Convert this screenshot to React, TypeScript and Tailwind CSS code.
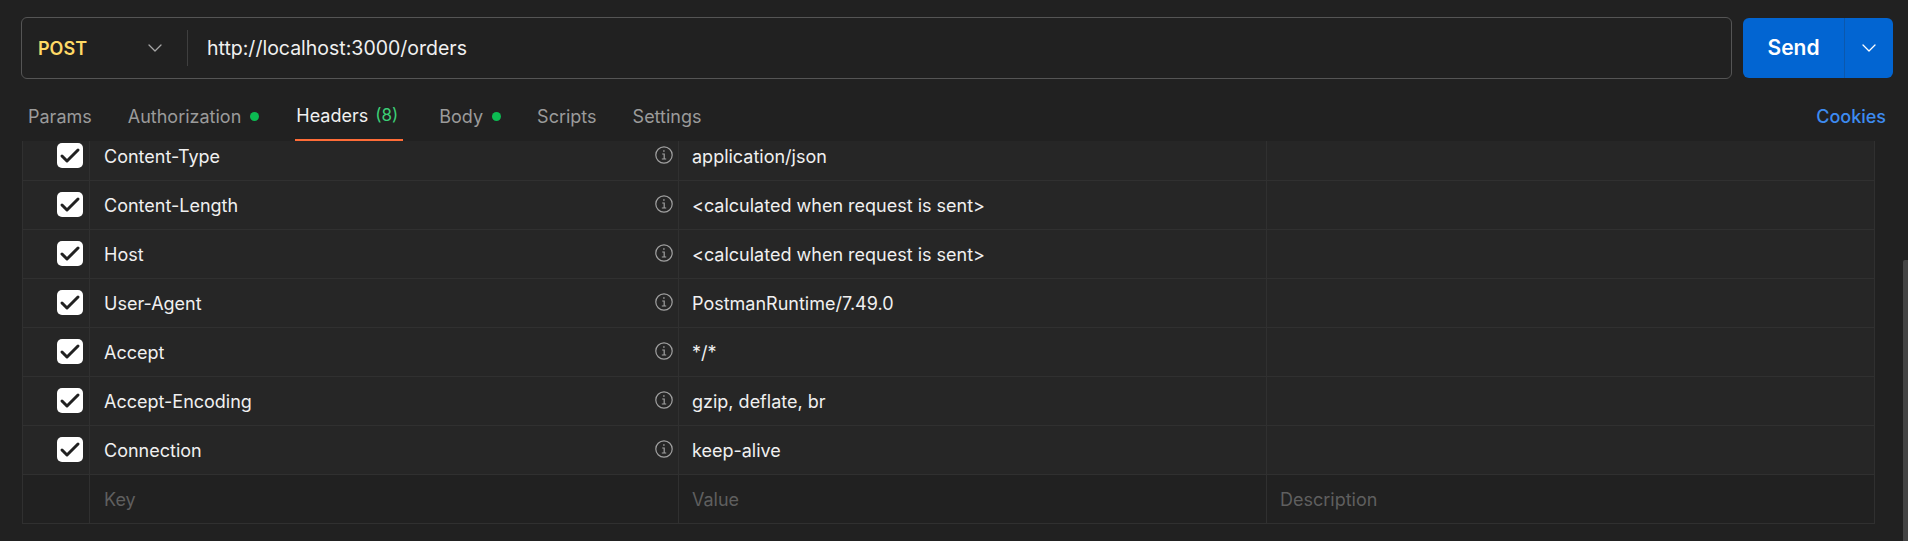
import { Check, ChevronDown } from 'lucide-react';

const rows = [
  { key: 'Content-Type', value: 'application/json' },
  { key: 'Content-Length', value: '<calculated when request is sent>' },
  { key: 'Host', value: '<calculated when request is sent>' },
  { key: 'User-Agent', value: 'PostmanRuntime/7.49.0' },
  { key: 'Accept', value: '*/*' },
  { key: 'Accept-Encoding', value: 'gzip, deflate, br' },
  { key: 'Connection', value: 'keep-alive' },
];

function Dot() {
  return <span className="ml-[9px] w-[9px] h-[9px] rounded-full bg-[#0cbb52]" />;
}

function InfoIcon() {
  return (
    <svg viewBox="0 0 18 18" className="w-[18px] h-[18px] -mt-[2px] text-[#a0a0a0]" fill="none" stroke="currentColor" strokeWidth="1.2">
      <circle cx="9" cy="9" r="8.2" />
      <path d="M7.2 8h2v5M6.8 13h4.4" />
      <path d="M8.2 5h1.4" strokeWidth="1.6" />
    </svg>
  );
}

export default function App() {
  return (
    <div className="w-[1908px] h-[541px] overflow-hidden bg-[#212121] text-[#f0f0f0] font-['Inter',sans-serif] text-[18px] flex flex-col relative">
      {/* Request bar */}
      <div className="flex gap-[11px] pl-[21px] pr-[15px] pt-[17px]">
        <div className="flex-1 h-[62px] flex items-center rounded-[6px] border border-[#555555]">
          <div className="w-[166px] h-[36px] pl-[16px] pr-[20px] flex items-center justify-between border-r border-[#3f3f3f]">
            <span className="font-semibold text-[#ffd966]">POST</span>
            <ChevronDown className="w-[24px] h-[24px] text-[#a6a6a6]" strokeWidth={1.3} />
          </div>
          <span className="pl-[19px] pt-[1px] text-[19.5px]">http://localhost:3000/orders</span>
        </div>
        <div className="w-[150px] h-[60px] mt-[1px] flex rounded-[6px] overflow-hidden bg-[#0265d2] text-white">
          <div className="w-[102px] flex items-center justify-center text-[21px] font-semibold border-r border-[#0b58ad]">Send</div>
          <div className="flex-1 flex items-center justify-center">
            <ChevronDown className="w-[24px] h-[24px]" strokeWidth={1.3} />
          </div>
        </div>
      </div>

      {/* Tabs */}
      <div className="h-[62px] pl-[28px] pr-[22px] flex items-start justify-between text-[#9b9b9b]">
        <div className="flex">
          <div className="h-[62px] pt-[13px] flex items-center">Params</div>
          <div className="ml-[36px] h-[62px] pt-[13px] flex items-center">Authorization<Dot /></div>
          <div className="ml-[36px] h-[62px] pt-[13px] flex items-center border-b-2 border-[#ff6c37] text-[#f0f0f0] px-[1px] w-[108px]">
            Headers<span className="ml-[7px] text-[17px] text-[#3ccf76]">(8)</span>
          </div>
          <div className="ml-[36px] h-[62px] pt-[13px] flex items-center">Body<Dot /></div>
          <div className="ml-[36px] h-[62px] pt-[13px] flex items-center">Scripts</div>
          <div className="ml-[36px] h-[62px] pt-[13px] flex items-center">Settings</div>
        </div>
        <div className="h-[62px] pt-[13px] flex items-center font-medium text-[#3d8bf0]">Cookies</div>
      </div>

      {/* Header table, first row scrolled under the tabs */}
      <div className="ml-[22px] w-[1853px] h-[383px] overflow-hidden border-l border-r border-b border-[#303030]">
        <div className="-mt-[9px]">
          {rows.map((row) => (
            <div key={row.key} className="flex h-[49px] bg-[#262626] border-b border-[#303030]">
              <div className="w-[67px] shrink-0 flex items-center pl-[34px] border-r border-[#303030]">
                <div className="w-[26px] h-[25px] -mt-[1px] rounded-[5px] bg-white flex items-center justify-center">
                  <Check className="w-[24px] h-[24px] shrink-0 text-[#212121]" strokeWidth={3} />
                </div>
              </div>
              <div className="w-[589px] shrink-0 flex items-center justify-between pl-[14px] pr-[5px] border-r border-[#303030]">
                <span>{row.key}</span>
                <InfoIcon />
              </div>
              <div className="w-[588px] shrink-0 flex items-center pl-[13px] border-r border-[#303030]">{row.value}</div>
              <div className="flex-1" />
            </div>
          ))}
          <div className="flex h-[49px] text-[#5f5f5f]">
            <div className="w-[67px] shrink-0 border-r border-[#303030]" />
            <div className="w-[589px] shrink-0 flex items-center pl-[14px] border-r border-[#303030]">Key</div>
            <div className="w-[588px] shrink-0 flex items-center pl-[13px] border-r border-[#303030]">Value</div>
            <div className="flex-1 flex items-center pl-[13px]">Description</div>
          </div>
        </div>
      </div>

      {/* Scrollbar thumb */}
      <div className="absolute right-0 top-[260px] bottom-0 w-[5px] rounded-tl-[2px] bg-[#444444]" />
    </div>
  );
}
